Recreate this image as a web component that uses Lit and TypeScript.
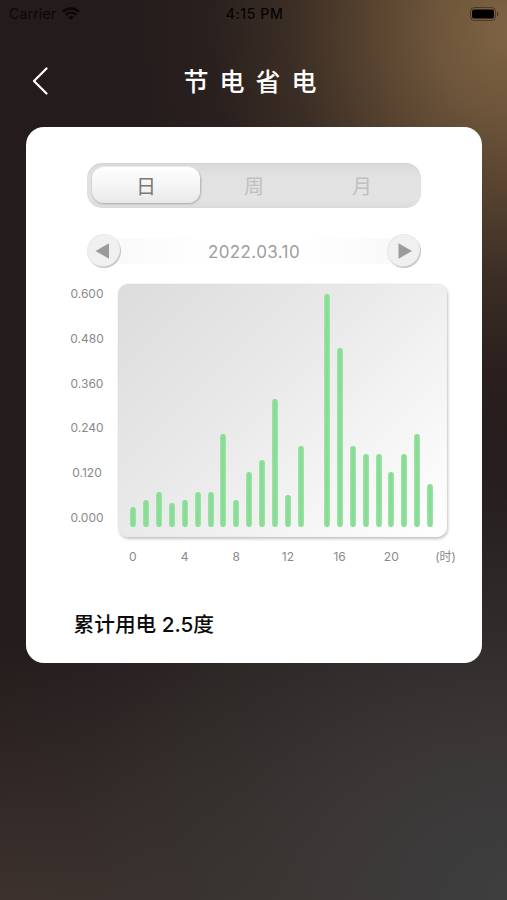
import { LitElement, html, css } from "lit";
import { customElement, property, state } from "lit/decorators.js";
import { classMap } from "lit/directives/class-map.js";

@customElement("status-bar")
class StatusBar extends LitElement {
  static styles = css`
    :host { display: grid; grid-template-columns: 1fr auto 1fr; align-items: center; height: 27px; padding: 0 7px 0 9px; color: #050404; font-size: 14.2px; box-sizing: border-box; }
    .left { display: flex; align-items: center; gap: 6px; opacity: .8; letter-spacing: .1px; }
    .time { font-weight: 500; font-size: 14px; letter-spacing: .6px; }
    .right { display: flex; justify-content: flex-end; }
    svg { display: block; }
  `;
  render() {
    return html`
      <div class="left"><span>Carrier</span>
        <svg width="18" height="14" viewBox="0 0 18 14" fill="none" stroke="currentColor" stroke-width="2.5">
          <path d="M1 4.700C5.500.3 12.500.3 17 4.700M4 7.800c2.900-2.700 7.100-2.700 10 0"/>
          <path d="M9 13 6.200 10.200c1.700-1.500 3.900-1.500 5.600 0z" fill="currentColor" stroke="none"/>
        </svg>
      </div>
      <div class="time">4:15 PM</div>
      <div class="right">
        <svg width="36" height="14" viewBox="0 0 36 14">
          <rect x="6.500" y=".5" width="25" height="13" rx="4" fill="none" stroke="#000" stroke-opacity=".38"/>
          <rect x="8" y="2.500" width="22" height="9" rx="2" fill="#000"/>
          <path d="M33 4.800c2 .8 2 3.600 0 4.400z" fill="#000" fill-opacity=".45"/>
        </svg>
      </div>`;
  }
}

@customElement("range-tabs")
class RangeTabs extends LitElement {
  static styles = css`
    :host { display: grid; grid-template-columns: repeat(3, 1fr); height: 45px; padding: 4px 5px; box-sizing: border-box; border-radius: 15px; background: linear-gradient(#d9d9d9, #e2e2e2 30%, #e3e3e3 80%, #dcdcdc); box-shadow: inset 0 0 3px rgba(0,0,0,.04); }
    .tab { display: flex; align-items: center; justify-content: center; padding-top: 3px; border-radius: 12px; font-size: 20px; line-height: 1; color: #c0c0c0; }
    .active { color: #797979; background: linear-gradient(#fff, #f3f3f3 60%, #e8e8e8); box-shadow: .5px 1px 2px rgba(0,0,0,.24), 0 -1px 1px rgba(255,255,255,.5); margin-bottom: 1px; }
  `;
  @state() selected = "日";
  render() {
    return ["日", "周", "月"].map((t) => html`
      <div class=${classMap({ tab: true, active: t === this.selected })} @click=${() => (this.selected = t)}>${t}</div>`);
  }
}

@customElement("date-stepper")
class DateStepper extends LitElement {
  static styles = css`
    :host { display: flex; align-items: center; justify-content: space-between; height: 34px; color: #9d9d9d; font-size: 17px; letter-spacing: .38px; background: linear-gradient(90deg, #f8f8f8, #fff 35%, #fff 65%, #f8f8f8) center / calc(100% - 30px) 26px no-repeat; }
    .round { display: flex; align-items: center; justify-content: center; width: 34px; height: 34px; border-radius: 50%; background: #f0f0f0; box-shadow: inset -1px -1.500px 1px rgba(0,0,0,.18), inset 1px 1px 1px rgba(0,0,0,.03); }
    .date { padding-top: 1px; }
    svg { display: block; }
  `;
  @property() date = "";
  render() {
    return html`
      <div class="round"><svg width="18" height="16" viewBox="0 0 18 16"><path d="M.5 8 14 .3v15.400z" fill="#9b9b9b"/></svg></div>
      <span class="date">${this.date}</span>
      <div class="round"><svg width="16" height="16" viewBox="0 0 16 16"><path d="M16 8 2.500.3v15.400z" fill="#9b9b9b"/></svg></div>`;
  }
}

@customElement("usage-chart")
class UsageChart extends LitElement {
  static styles = css`
    :host { display: grid; grid-template-columns: 39px 329.500px; column-gap: 11px; color: #898989; font-size: 12px; }
    .scale { display: flex; flex-direction: column; justify-content: space-between; align-items: center; height: 239px; padding-top: 2px; }
    .scale span { line-height: 15px; }
    .plot { display: flex; align-items: flex-end; justify-content: space-between; height: 253px; padding: 0 13.500px 10.500px 12.500px; box-sizing: border-box; border-radius: 10px; background: linear-gradient(135deg, #dcdcdc, #e9e9e9 42%, #f4f4f4 70%, #fff); box-shadow: 1px 1.500px 3px rgba(0,0,0,.24), inset 0 0 2px rgba(0,0,0,.05); }
    .bar { width: 6px; border-radius: 3px; background: linear-gradient(90deg, #9fe5a8, #88dc95 35%, #88dc95 65%, #9fe5a8); }
    .hours { grid-column: 2; display: grid; grid-template-columns: repeat(6, 51.700px) auto; margin-left: -10.500px; padding-top: 11.500px; text-align: center; line-height: 15px; }
    .hours .unit { padding-left: 18px; margin-right: -20px; white-space: nowrap; text-align: left; }
  `;
  @property({ attribute: false }) values: number[] = [];
  render() {
    return html`
      <div class="scale">${["0.600", "0.480", "0.360", "0.240", "0.120", "0.000"].map((v) => html`<span>${v}</span>`)}</div>
      <div class="plot">${this.values.map((v) => html`<div class="bar" style="height:${(v / 0.6) * 233}px"></div>`)}</div>
      <div class="hours">${[0, 4, 8, 12, 16, 20].map((h) => html`<span>${h}</span>`)}<span class="unit">(时)</span></div>`;
  }
}

@customElement("app-root")
class AppRoot extends LitElement {
  static styles = css`
    :host {
      display: flex; flex-direction: column; height: 900px; overflow: hidden; box-sizing: border-box;
      font-family: Inter, "Noto Sans CJK SC", sans-serif;
      background:
        radial-gradient(ellipse 390px 450px at 507px 30px, rgba(127,99,67,1), rgba(118,92,62,.9) 18%, rgba(104,80,54,.7) 38%, rgba(84,65,46,.5) 55%, rgba(60,44,35,.28) 76%, rgba(45,34,30,0)),
        radial-gradient(ellipse 560px 470px at 507px 890px, #3e3e3f, rgba(59,57,56,.9) 30%, rgba(54,51,49,.65) 58%, rgba(50,46,45,.3) 80%, rgba(48,44,44,0)),
        linear-gradient(#231b1c, #241b1c 70%, #2c2322 82%, #3f322d);
    }
    .nav { display: grid; grid-template-columns: 60px 1fr 60px; align-items: center; height: 100px; padding: 7px 0 0 32px; box-sizing: border-box; }
    .back { display: block; }
    .title { text-align: center; color: #fff; font-size: 25px; font-weight: 500; letter-spacing: 11px; white-space: nowrap; line-height: 36px; margin-left: -28px; padding-top: 2px; }
    .card { display: flex; flex-direction: column; height: 536px; margin: 0 25.500px 0 26px; padding: 36px 0 0; box-sizing: border-box; border-radius: 18px; background: #fff; }
    .controls { display: flex; flex-direction: column; gap: 26px; margin: 0 60.500px 0 61px; }
    .chart { margin: 16px 0 0 41.500px; }
    .total { margin: 46px 0 0 47.500px; color: #0b0b0b; font-size: 20.700px; font-weight: 500; line-height: 30px; }
  `;
  private usage = [.05, .069, .09, .06, .069, .09, .09, .239, .069, .14, .17, .329, .08, .208, 0, .6, .46, .208, .188, .188, .14, .188, .239, .109];
  render() {
    return html`
      <status-bar></status-bar>
      <div class="nav">
        <svg class="back" width="17" height="28" viewBox="0 0 17 28" fill="none" stroke="#fff" stroke-width="2.200" stroke-linecap="round" stroke-linejoin="round"><path d="M14.500 1.500 2 14 14.500 26.500"/></svg>
        <div class="title">节电省电</div>
      </div>
      <div class="card">
        <div class="controls">
          <range-tabs></range-tabs>
          <date-stepper date="2022.03.10"></date-stepper>
        </div>
        <usage-chart class="chart" .values=${this.usage}></usage-chart>
        <div class="total">累计用电 2.5度</div>
      </div>`;
  }
}
